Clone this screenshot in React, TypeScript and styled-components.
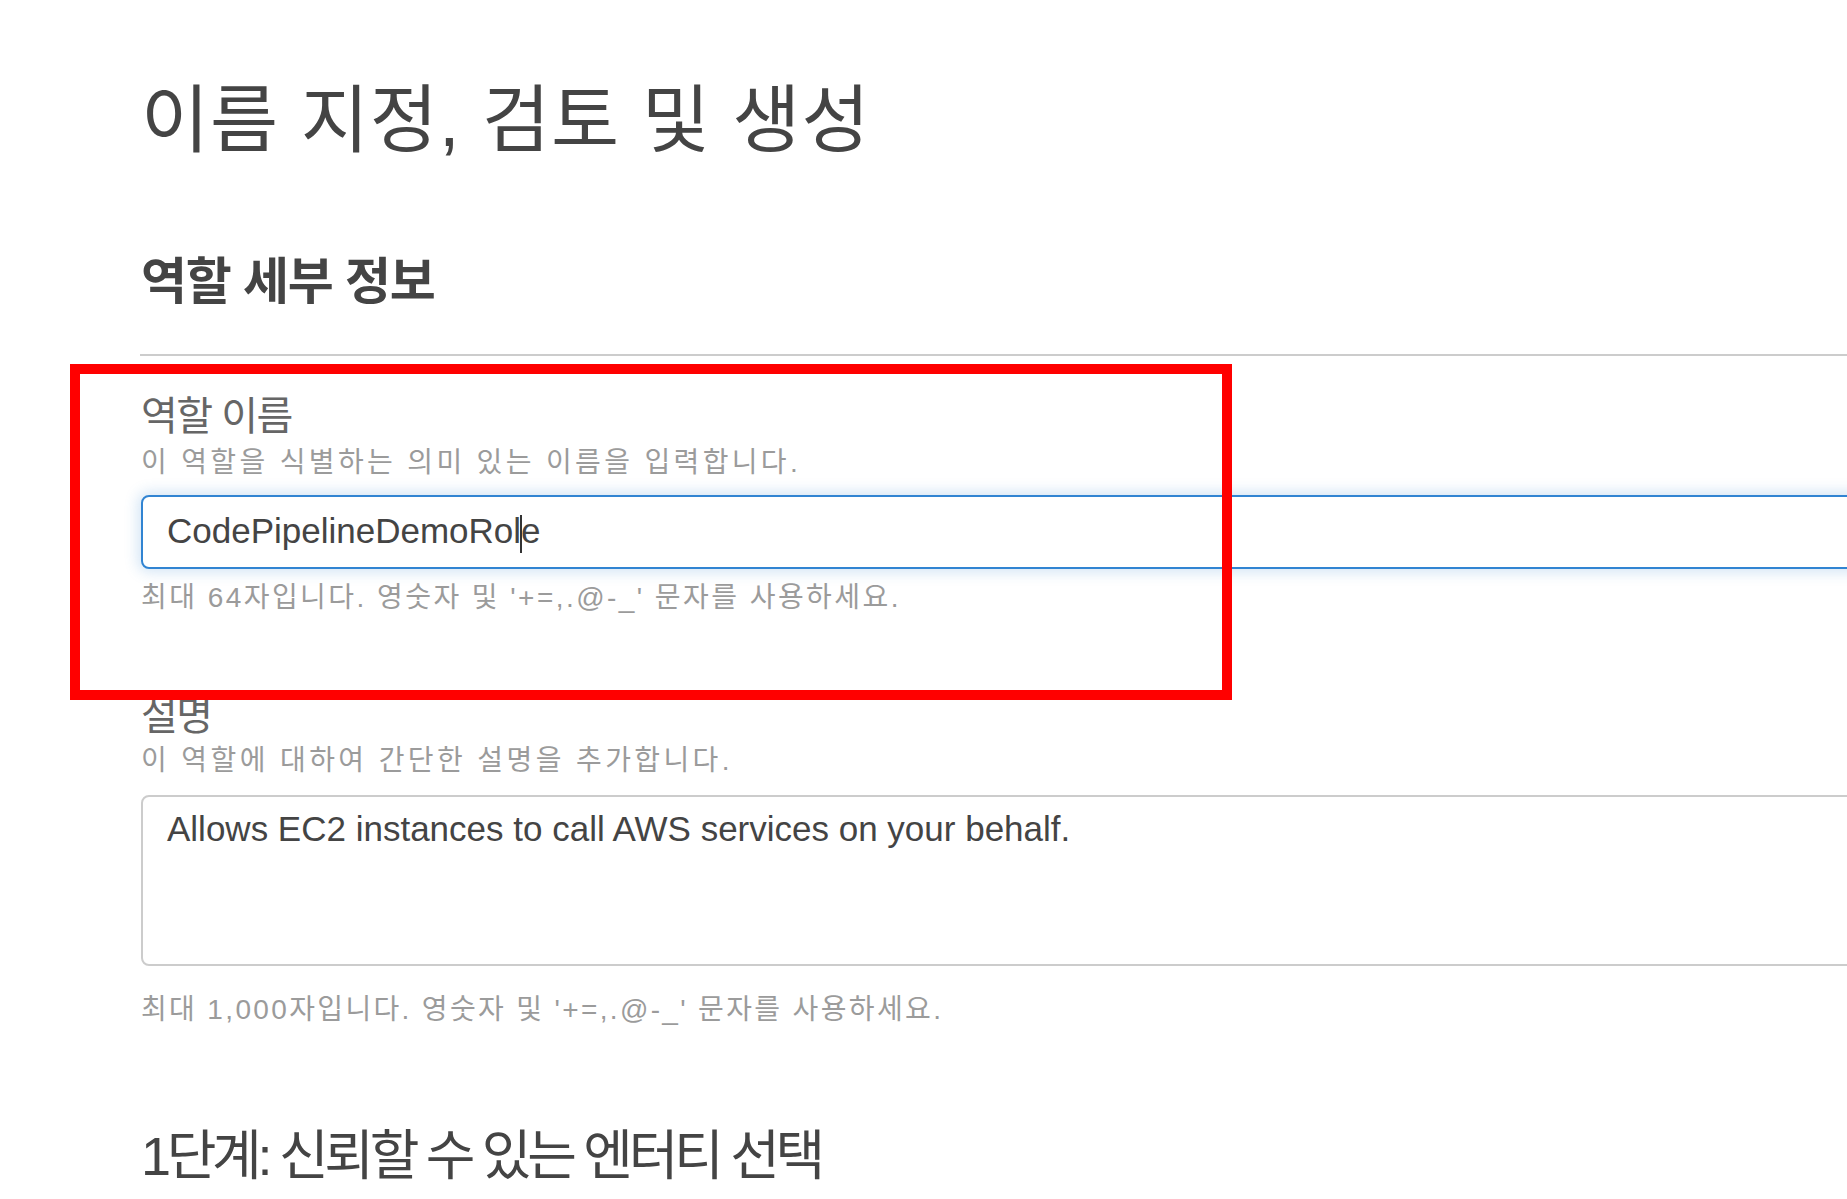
import React from "react";
import styled, { createGlobalStyle } from "styled-components";

const Global = createGlobalStyle`
  html, body {
    margin: 0;
    padding: 0;
    background: #ffffff;
    overflow: hidden;
  }
  body {
    font-family: "Liberation Sans", "Noto Sans CJK KR", sans-serif;
  }
`;

const Page = styled.div`
  position: relative;
  width: 1847px;
  height: 1199px;
  overflow: hidden;
  box-sizing: border-box;
  padding-left: 141px;
`;

const Form = styled.div`
  width: 1900px;
  display: flex;
  flex-direction: column;
`;

const Title = styled.h1`
  margin: 77px 0 0 0;
  font-size: 74px;
  line-height: 88px;
  font-weight: 400;
  letter-spacing: 1px;
  color: #444444;
`;

const SectionTitle = styled.h2<{ $bold?: boolean; $top: number; $size: number; $spacing: number }>`
  margin: ${(p) => p.$top}px 0 0 0;
  font-size: ${(p) => p.$size}px;
  line-height: ${(p) => Math.round(p.$size * 1.2)}px;
  font-weight: ${(p) => (p.$bold ? 700 : 400)};
  letter-spacing: ${(p) => p.$spacing}px;
  color: #444444;
`;

const Divider = styled.hr`
  margin: 42px 0 0 -1px;
  border: none;
  height: 2px;
  background: #cccccc;
`;

const Label = styled.div<{ $top: number }>`
  margin-top: ${(p) => p.$top}px;
  font-size: 40px;
  line-height: 48px;
  letter-spacing: -1.5px;
  color: #666666;
`;

const Hint = styled.div<{ $top: number; $spacing: number }>`
  margin-top: ${(p) => p.$top}px;
  font-size: 28px;
  line-height: 32px;
  letter-spacing: ${(p) => p.$spacing}px;
  color: #9b9b9b;
`;

const InputBox = styled.div`
  margin-top: 16px;
  height: 74px;
  box-sizing: border-box;
  border: 2px solid #3184d2;
  border-radius: 8px;
  box-shadow: 0 0 14px 3px rgba(49, 132, 210, 0.22);
  padding: 0 24px;
  display: flex;
  align-items: center;
  font-size: 35px;
  color: #444444;
  background: #ffffff;
`;

const Caret = styled.span`
  display: inline-block;
  width: 2px;
  height: 38px;
  background: #333333;
  vertical-align: middle;
  margin: 0 -1px;
`;

const TextArea = styled.div`
  margin-top: 18px;
  height: 171px;
  box-sizing: border-box;
  border: 2px solid #cccccc;
  border-radius: 8px;
  padding: 11px 24px 8px;
  font-size: 35px;
  line-height: 42px;
  color: #444444;
`;

const Highlight = styled.div`
  position: absolute;
  left: 70px;
  top: 364px;
  width: 1162px;
  height: 336px;
  box-sizing: border-box;
  border: 10px solid #ff0000;
  pointer-events: none;
`;

export default function App() {
  return (
    <Page>
      <Global />
      <Form>
        <Title>이름 지정, 검토 및 생성</Title>
        <SectionTitle $bold $top={87} $size={50} $spacing={-1.3}>
          역할 세부 정보
        </SectionTitle>
        <Divider />
        <Label $top={36}>역할 이름</Label>
        <Hint $top={7} $spacing={3.35}>
          이 역할을 식별하는 의미 있는 이름을 입력합니다.
        </Hint>
        <InputBox>
          <span>
            CodePipelineDemoRol
            <Caret />
            e
          </span>
        </InputBox>
        <Hint $top={13} $spacing={2.45}>
          최대 64자입니다. 영숫자 및 '+=,.@-_' 문자를 사용하세요.
        </Hint>
        <Label $top={78}>설명</Label>
        <Hint $top={5} $spacing={3.4}>
          이 역할에 대하여 간단한 설명을 추가합니다.
        </Hint>
        <TextArea>Allows EC2 instances to call AWS services on your behalf.</TextArea>
        <Hint $top={28} $spacing={2.35}>
          최대 1,000자입니다. 영숫자 및 '+=,.@-_' 문자를 사용하세요.
        </Hint>
        <SectionTitle $top={98} $size={54} $spacing={-4.3}>
          1단계: 신뢰할 수 있는 엔터티 선택
        </SectionTitle>
      </Form>
      <Highlight />
    </Page>
  );
}
